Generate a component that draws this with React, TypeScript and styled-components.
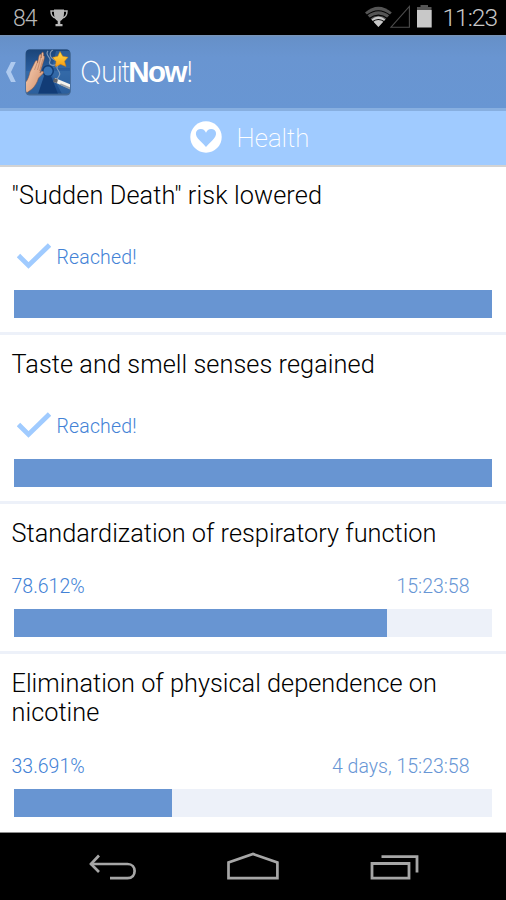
import React from "react";
import styled, { createGlobalStyle } from "styled-components";

const GlobalStyle = createGlobalStyle`
  * { box-sizing: border-box; }
  body { margin: 0; background: #000; }
`;

const Screen = styled.div`
  width: 506px;
  height: 900px;
  display: flex;
  flex-direction: column;
  overflow: hidden;
  background: #fff;
  font-family: Roboto, sans-serif;
  font-weight: 300;
`;

const StatusBar = styled.div`
  flex: none;
  height: 35px;
  display: flex;
  align-items: center;
  justify-content: space-between;
  padding: 0 9px 0 13px;
  background: #000;
  color: #c8c8c8;
`;

const StatusGroup = styled.div`
  display: flex;
  align-items: center;
`;

const Temperature = styled.span`
  width: 37px;
  font-size: 23px;
  line-height: 35px;
  padding-top: 1px;
  font-weight: 350;
  letter-spacing: -0.9px;
  color: #b8b8b8;
`;

const Clock = styled.span`
  font-size: 24.5px;
  line-height: 36px;
  padding-top: 1px;
  font-weight: 350;
  letter-spacing: -1px;
`;

const ActionBar = styled.header`
  flex: none;
  height: 73px;
  display: flex;
  align-items: center;
  padding-left: 5px;
  background: linear-gradient(#7693b8 0, #7693b8 1px, #6690c8 2px, #6995d1 22px, #6896d3 100%);
  color: #fff;
`;

const Brand = styled.div`
  display: flex;
  margin-left: 8px;
  font: 200 29px/34px Inter, sans-serif;
  letter-spacing: -1.2px;
`;

const BrandStrong = styled.strong`
  font: 700 29.5px/34px "Liberation Sans", sans-serif;
  letter-spacing: -1.6px;
`;

const SectionBar = styled.div`
  flex: none;
  height: 59px;
  display: flex;
  justify-content: center;
  align-items: center;
  gap: 15px;
  padding: 0 7px 3px 0;
  border-top: 3px solid #87afe0;
  border-bottom: 2px solid #d3d3d3;
  background: #a0cbff;
  color: #fff;
`;

const SectionTitle = styled.h1`
  margin: 2px 0 0;
  font-size: 25.8px;
  line-height: 32px;
  font-weight: 220;
`;

const List = styled.main`
  flex: 1;
  display: flex;
  flex-direction: column;
`;

const Item = styled.section<{ $height: number }>`
  flex: none;
  height: ${(p) => p.$height}px;
  display: flex;
  flex-direction: column;
  padding: 14.6px 14px 14px 11.5px;
  border-bottom: 3px solid #edf1f9;

  &:first-child {
    padding-top: 13.9px;
  }

  &:last-child {
    padding-bottom: 15px;
    border-bottom: 0;
  }
`;

const ItemTitle = styled.h2<{ $tracking: number }>`
  margin: 0;
  font-size: 25.3px;
  line-height: 29.4px;
  font-weight: 280;
  letter-spacing: ${(p) => p.$tracking}px;
  color: #000;
`;

const Reached = styled.div`
  display: flex;
  align-items: center;
  gap: 6px;
  margin: auto 0 17px 5px;
  font-size: 19.5px;
  line-height: 26px;
  letter-spacing: 0.15px;
  color: #4382d6;
`;

const Meta = styled.div`
  display: flex;
  justify-content: space-between;
  margin: auto 22.5px 11px 0;
  font-size: 19.5px;
  line-height: 23px;
  color: #4382d6;
`;

const Remaining = styled.span`
  color: #6896d5;
`;

const Track = styled.div`
  flex: none;
  height: 28px;
  margin-left: 2.5px;
  background: #edf1f9;
`;

const Fill = styled.div`
  height: 100%;
  background: #6895d2;
`;

const NavBar = styled.nav`
  flex: none;
  height: 68px;
  display: flex;
  justify-content: center;
  padding-top: 18px;
  border-top: 1px solid #8d8d8d;
  background: #000;
`;

const NavSlot = styled.div`
  width: 141px;
  display: flex;
  justify-content: center;
`;

const TileSvg = styled.svg`
  margin-left: 7px;
`;

const CheckSvg = styled.svg`
  margin-bottom: 4px;
`;

const Trophy = () => (
  <svg width="18" height="18" viewBox="0 0 18 18">
    <path d="M4 .5h10v4c0 4-1.500 6.500-3.700 7.500v3h2.200v2.200h-7V15h2.200v-3C5.500 11 4 8.500 4 4.500z" fill="#b8b8b8" />
    <path d="M4.500 2H1c0 4 1.500 6.500 5 7M13.500 2H17c0 4-1.500 6.500-5 7" fill="none" stroke="#b8b8b8" strokeWidth="1.500" />
  </svg>
);

const Signals = () => (
  <svg width="98" height="35" viewBox="345 0 98 35">
    <path d="M366 12.500Q379.400 1 392.800 12.500L379.400 27z" fill="#555" />
    <path d="M372.500 19.500Q379.400 13.500 386.300 19.500L379.400 27z" fill="#c8c8c8" />
    <path d="M367.500 15.500Q379.400 6 391.300 15.500M370 18.700Q379.400 11.500 388.800 18.700M373 22Q379.400 17 385.800 22" fill="none" stroke="#000" strokeWidth="1.100" />
    <path d="M392 27.200H410.400V6.500z" fill="none" stroke="#4d4d4d" strokeWidth="1.100" />
    <path d="M418 10V7h3.500V5h7.500v2h3.500v3z" fill="#555" />
    <path d="M418 10h14.700v17.500H418z" fill="#c8c8c8" />
  </svg>
);

const BackCaret = () => (
  <svg width="12" height="24" viewBox="0 0 12 24">
    <path d="M6 2h4.800L6 12l4.800 10H6L1 12z" fill="#aecaef" />
  </svg>
);

const AppIcon = () => (
  <TileSvg width="48" height="50" viewBox="0 0 48 50">
    <defs>
      <linearGradient id="tile" x2="0" y2="1">
        <stop stopColor="#194173" />
        <stop offset=".5" stopColor="#2b60a2" />
        <stop offset="1" stopColor="#194886" />
      </linearGradient>
      <linearGradient id="skin" x2="1" y2="1">
        <stop stopColor="#ffd9bc" />
        <stop offset="1" stopColor="#cd8b68" />
      </linearGradient>
      <linearGradient id="gold" x2="0" y2="1">
        <stop stopColor="#ffe04a" />
        <stop offset="1" stopColor="#f89a13" />
      </linearGradient>
      <clipPath id="frame"><rect x="2" y="2.500" width="44" height="44" rx="3.500" /></clipPath>
    </defs>
    <rect x="1.300" y="2.500" width="45.500" height="46" rx="4.500" fill="#36587f" opacity=".75" />
    <g clipPath="url(#frame)">
      <path d="M0 0h48v50H0z" fill="url(#tile)" />
      <path d="M2 24h17l5 6-9 17H2zM28 21h18V4H32zM28 28l10 19h8V24H30z" fill="#3b71ad" opacity=".55" />
      <path d="M20 29L14 47h20l-7-18z" fill="#123c76" />
      <circle cx="24" cy="24" r="6" fill="#123c73" />
      <circle cx="24" cy="24" r="4.500" fill="#3974b6" />
      <path d="M1 36C4 33 5 29 6 25L11 15C12 13 14 13 13.500 16L15 9C16 6 18 7 17 11L17.500 6.500C18.500 4 20 5 19.500 9C21 8 20.500 12 19 16L16 26C17 24 20 23.500 19.500 26L14.500 31C13 36 11 39 8 42L1 47z" fill="url(#skin)" stroke="#95593e" strokeWidth=".5" />
      <path d="M13.500 15L10.500 23M17 10L13.500 23M19 12L15.500 24" stroke="#b57655" strokeWidth=".6" />
      <path d="M24 4c-4 4 4 7 2 10s2 6 7 3M29 3c-4 2-4 8 2 10s3 4 2 7 5 5 2 9-1 3-2 5" fill="none" stroke="#9dafc6" strokeWidth="1.200" opacity=".75" />
      <path d="M31 31l17 7v5l-18-8z" fill="#f4f2ed" />
      <path d="M37 36.500l11 4.500v2.500l-13-6z" fill="#9aa0a7" />
      <path d="M30 31l4 1.500-1 3.500-4-1z" fill="#60636a" />
    </g>
    <path d="M36 4.500L38.700 9.200 44 10.200 40.500 14.200 42 19.500 36.500 17.300 31.500 19.700 32 14.300 28.500 10.400 33.800 9.300z" fill="url(#gold)" stroke="#d5800b" strokeWidth=".5" />
  </TileSvg>
);

const HeartBadge = () => (
  <svg width="32" height="32" viewBox="0 0 32 32">
    <circle cx="16" cy="16" r="15.700" fill="#fff" />
    <path d="M16 26Q13.500 23 10 19.700C3.500 14 5.500 8 10.800 8c2.700 0 4.200 1.500 5.200 3.700C17 9.500 18.500 8 21.200 8c5.300 0 7.300 6 .8 11.700Q18.500 23 16 26z" fill="#a0cbff" />
  </svg>
);

const Check = () => (
  <CheckSvg width="34" height="26" viewBox="0 0 34 26">
    <path d="M1.500 12.500L11.500 22.500 32.500 2" fill="none" stroke="#a0cbff" strokeWidth="4.800" />
  </CheckSvg>
);

const BackIcon = () => (
  <svg width="48" height="32" viewBox="88 852 48 32">
    <path d="M90.500 865H127.500C137 865 137 879.200 127.500 879.200H110" fill="none" stroke="#a6a6a6" strokeWidth="2.700" />
    <path d="M99 856.500L91 865 99 873" fill="none" stroke="#a6a6a6" strokeWidth="2.700" />
  </svg>
);

const HomeIcon = () => (
  <svg width="54" height="32" viewBox="226 852 54 32">
    <path d="M228.500 879.200V863.500L253 855 277.400 863.500V879.200z" fill="none" stroke="#a6a6a6" strokeWidth="2.700" />
  </svg>
);

const RecentsIcon = () => (
  <svg width="50" height="32" viewBox="369.500 852 50 32">
    <path d="M372.500 864.500H409.500V879.200H372.500zM382 857.700H417.500V873.500" fill="none" stroke="#a6a6a6" strokeWidth="2.800" />
  </svg>
);

type Goal = {
  title: string;
  height: number;
  tracking: number;
  percent: number;
  label?: string;
  remaining?: string;
};

const goals: Goal[] = [
  { title: "\"Sudden Death\" risk lowered", height: 168, tracking: 0.1, percent: 100 },
  { title: "Taste and smell senses regained", height: 169, tracking: 0.06, percent: 100 },
  { title: "Standardization of respiratory function", height: 150, tracking: 0.01, percent: 78.12, label: "78.612%", remaining: "15:23:58" },
  { title: "Elimination of physical dependence on nicotine", height: 178, tracking: 0.02, percent: 33.1, label: "33.691%", remaining: "4 days, 15:23:58" },
];

export default function App() {
  return (
    <Screen>
      <GlobalStyle />
      <StatusBar>
        <StatusGroup>
          <Temperature>84</Temperature>
          <Trophy />
        </StatusGroup>
        <StatusGroup>
          <Signals />
          <Clock>11:23</Clock>
        </StatusGroup>
      </StatusBar>
      <ActionBar>
        <BackCaret />
        <AppIcon />
        <Brand>
          <span>Quit</span>
          <BrandStrong>Now</BrandStrong>
          <span>!</span>
        </Brand>
      </ActionBar>
      <SectionBar>
        <HeartBadge />
        <SectionTitle>Health</SectionTitle>
      </SectionBar>
      <List>
        {goals.map((goal) => (
          <Item key={goal.title} $height={goal.height}>
            <ItemTitle $tracking={goal.tracking}>{goal.title}</ItemTitle>
            {goal.remaining ? (
              <Meta>
                <span>{goal.label}</span>
                <Remaining>{goal.remaining}</Remaining>
              </Meta>
            ) : (
              <Reached>
                <Check />
                <span>Reached!</span>
              </Reached>
            )}
            <Track>
              <Fill style={{ width: `${goal.percent}%` }} />
            </Track>
          </Item>
        ))}
      </List>
      <NavBar>
        <NavSlot><BackIcon /></NavSlot>
        <NavSlot><HomeIcon /></NavSlot>
        <NavSlot><RecentsIcon /></NavSlot>
      </NavBar>
    </Screen>
  );
}
